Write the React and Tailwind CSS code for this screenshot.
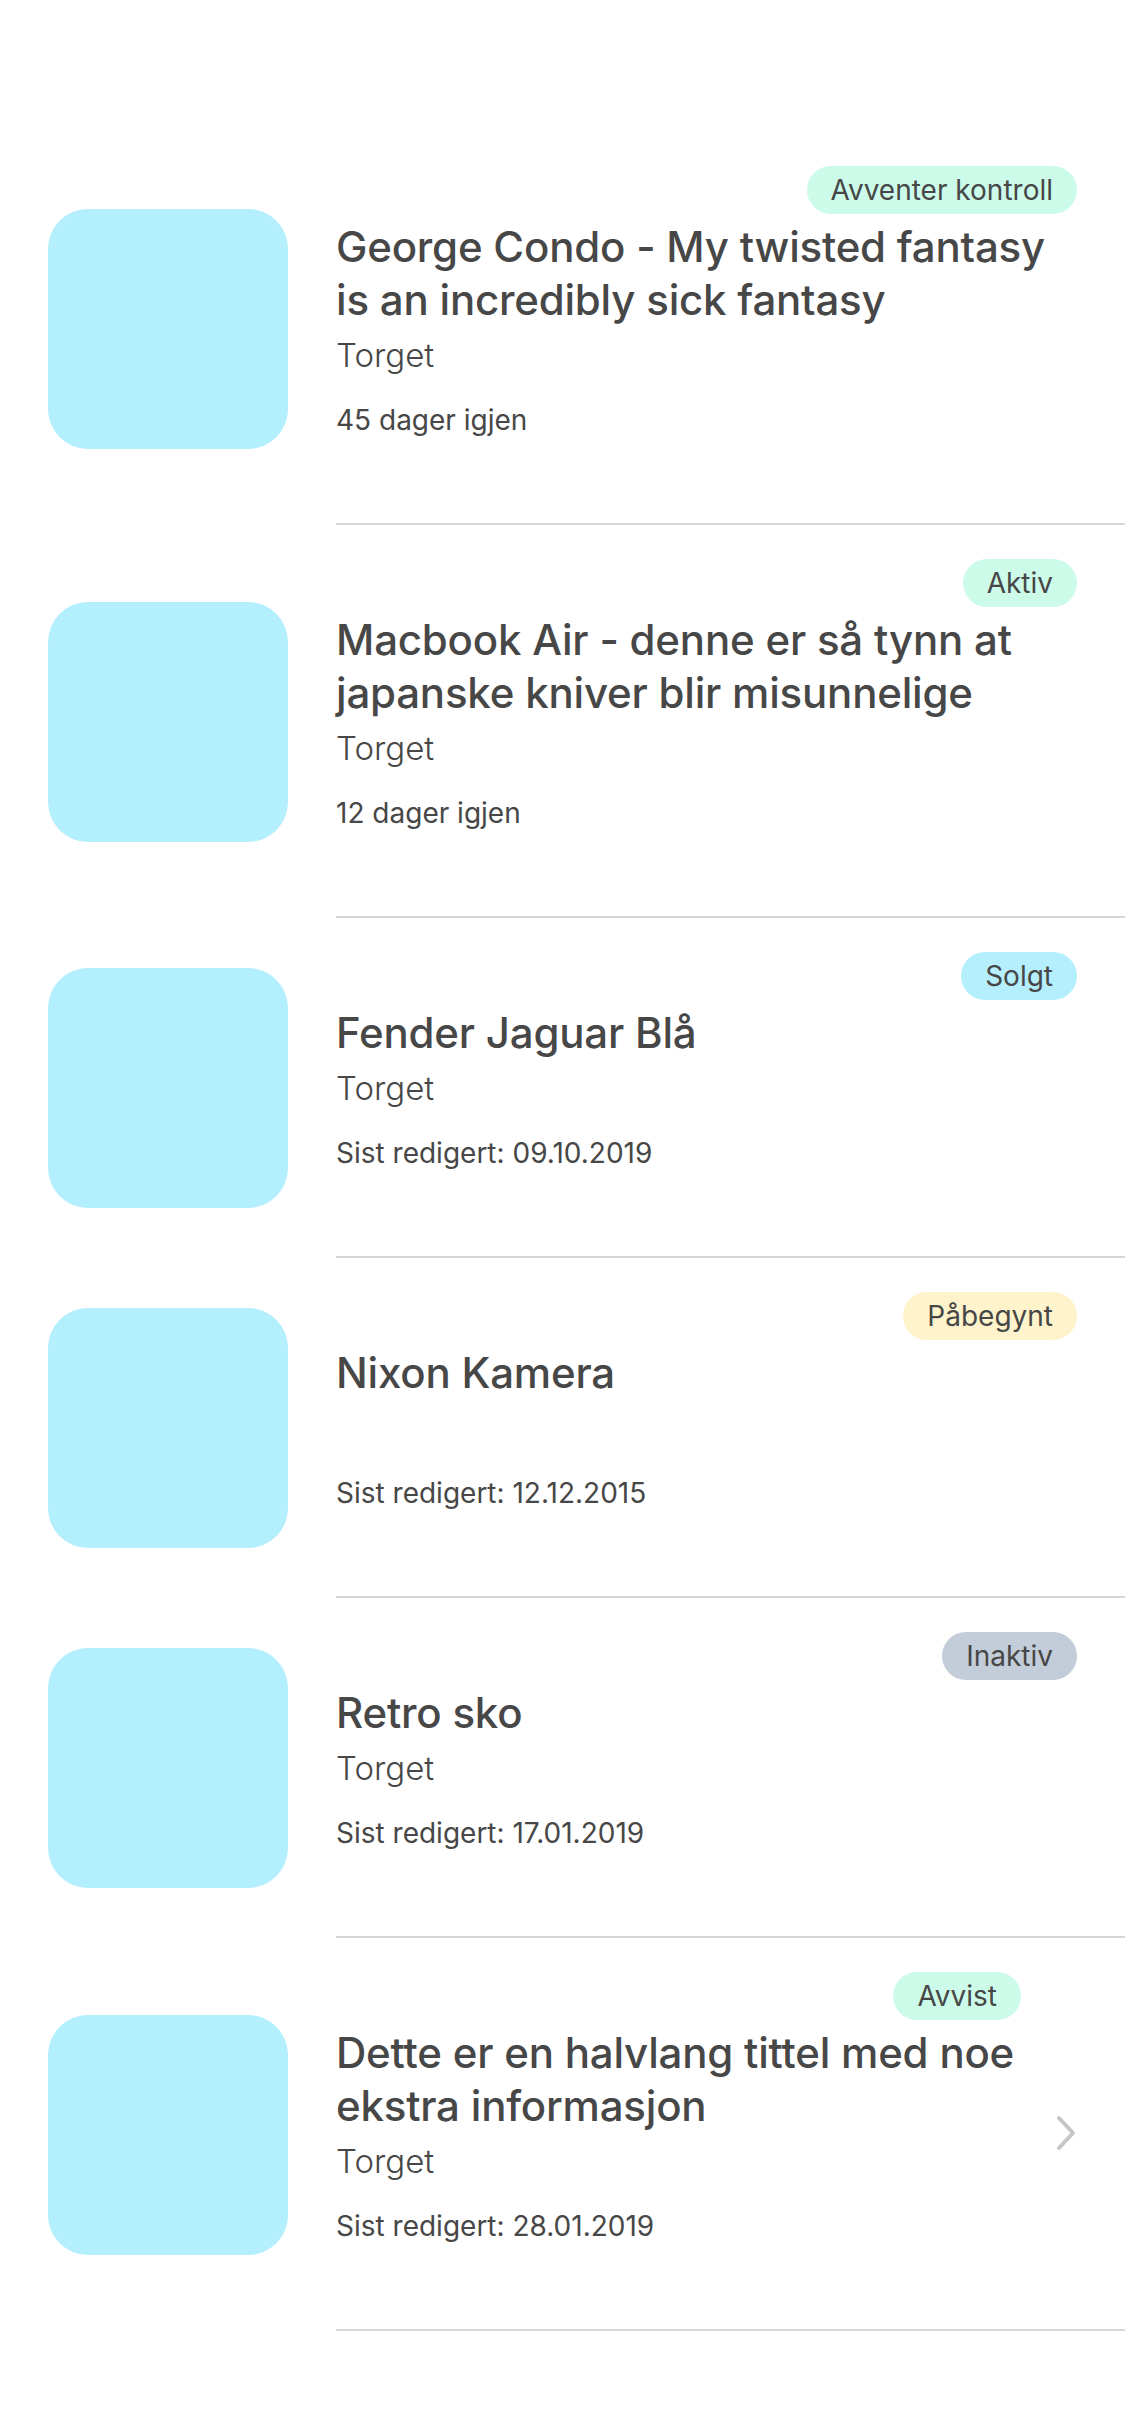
import React from 'react';

const ads = [
  { title: 'George Condo - My twisted fantasy is an incredibly sick fantasy', place: 'Torget', meta: '45 dager igjen', status: 'Avventer kontroll', tone: 'bg-[#ccfbea]' },
  { title: 'Macbook Air - denne er så tynn at japanske kniver blir misunnelige', place: 'Torget', meta: '12 dager igjen', status: 'Aktiv', tone: 'bg-[#ccfbea]' },
  { title: 'Fender Jaguar Blå', place: 'Torget', meta: 'Sist redigert: 09.10.2019', status: 'Solgt', tone: 'bg-[#b5effd]' },
  { title: 'Nixon Kamera', place: '', meta: 'Sist redigert: 12.12.2015', status: 'Påbegynt', tone: 'bg-[#fff3cb]' },
  { title: 'Retro sko', place: 'Torget', meta: 'Sist redigert: 17.01.2019', status: 'Inaktiv', tone: 'bg-[#c3cdd9]' },
  { title: 'Dette er en halvlang tittel med noe ekstra informasjon', place: 'Torget', meta: 'Sist redigert: 28.01.2019', status: 'Avvist', tone: 'bg-[#ccfbea]', chevron: true },
];

const Chevron = () => (
  <svg width="22" height="36" viewBox="0 0 22 36" fill="none" className="shrink-0">
    <path d="M4 3 L18 18 L4 33" stroke="#c6c6c6" strokeWidth="4" strokeLinecap="round" strokeLinejoin="round" />
  </svg>
);

const AdRow = ({ ad }) => (
  <div className="flex items-center">
    {/* bilde-plassholder */}
    <div className="ml-12 w-[240px] h-[240px] rounded-[40px] bg-[#b3effd] shrink-0" />

    <div className="ml-12 flex-1 flex items-center border-b-2 border-[#d6d6d6] pt-[34px] pb-[85px] pr-12">
      <div className="flex-1 min-w-0">
        <div className="flex justify-end">
          <span className={`${ad.tone} rounded-full h-[48px] px-6 flex items-center text-[28px] text-[#474747]`}>
            {ad.status}
          </span>
        </div>
        <h2 className="mt-[6px] text-[42px] leading-[53px] font-medium text-[#474747] tracking-[-0.2px]">
          {ad.title}
        </h2>
        <p className="mt-[3px] text-[33px] leading-[53px] font-light text-[#474747] h-[53px]">
          {ad.place}
        </p>
        <p className="mt-[20px] text-[28px] leading-[36px] text-[#474747]">
          {ad.meta}
        </p>
      </div>
      {ad.chevron && (
        <div className="ml-[34px] mt-[50px]">
          <Chevron />
        </div>
      )}
    </div>
  </div>
);

const App = () => {
  return (
    <div className="min-h-screen bg-white pt-[132px] font-['Inter','Liberation_Sans',sans-serif]">
      {ads.map((ad) => (
        <AdRow key={ad.title} ad={ad} />
      ))}
    </div>
  );
};

export default App;
